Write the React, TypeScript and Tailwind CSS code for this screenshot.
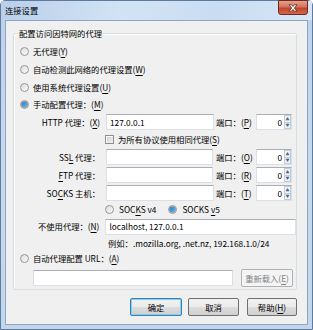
import type { ReactNode } from "react";

const font = { fontFamily: '"Noto Sans CJK SC", "Noto Sans", sans-serif' };

function Mn({ children }: { children: ReactNode }) {
	return <span className="underline decoration-[0.5px] underline-offset-[1.5px]">{children}</span>;
}

function Radio({ checked = false }: { checked?: boolean }) {
	return (
		<span className="flex size-[9px] shrink-0 items-center justify-center rounded-full border border-[#979797] bg-gradient-to-br from-[#dcdcdc] to-[#fbfbfb]">
			{checked && (
				<span className="size-[5px] rounded-full bg-gradient-to-br from-[#1d78c4] to-[#5bb7ef] ring-[0.5px] ring-[#1c5180]" />
			)}
		</span>
	);
}

function Check() {
	return (
		<span className="flex size-[9px] shrink-0 items-center justify-center border border-[#8f8f8f] bg-white">
			<span className="size-[6px] bg-gradient-to-br from-[#cbcfd5] to-[#f6f6f6]" />
		</span>
	);
}

function TextBox({ className = "", value = "" }: { className?: string; value?: string }) {
	return (
		<div
			className={
				"flex h-[16px] items-center border border-[#dbdfe6] border-t-[#abadb3] bg-white pl-[3px] text-[8.3px] text-black " +
				className
			}
		>
			{value}
		</div>
	);
}

function Spin() {
	return (
		<div className="flex h-[16px] w-[36px] border border-[#dbdfe6] border-t-[#abadb3] bg-white">
			<div className="flex flex-1 items-center justify-end pr-[2px] text-[8.3px]">0</div>
			<div className="flex w-[7px] flex-col">
				<div className="flex flex-1 items-center justify-center border border-[#c3ccd6] bg-[#f2f4f7] text-[4px] leading-none text-[#4d6185]">
					▲
				</div>
				<div className="flex flex-1 items-center justify-center border border-t-0 border-[#c3ccd6] bg-[#eef1f5] text-[4px] leading-none text-[#4d6185]">
					▼
				</div>
			</div>
		</div>
	);
}

function Btn({ children, className = "", focused = false, disabled = false }: {
	children: ReactNode;
	className?: string;
	focused?: boolean;
	disabled?: boolean;
}) {
	const border = focused ? "border-[#3c7fb1] shadow-[inset_0_0_0_1px_#7fd2f6]" : disabled ? "border-[#adb2b5]" : "border-[#707070]";
	const bg = disabled ? "bg-[#f4f4f4]" : "bg-[linear-gradient(#f2f2f2_0%,#ebebeb_50%,#dddddd_50%,#cfcfcf_100%)]";
	return (
		<div
			className={`flex items-center justify-center rounded-[2px] border text-[8.3px] ${border} ${bg} ${disabled ? "text-[#838383]" : "text-black"} ${className}`}
		>
			{children}
		</div>
	);
}

function ProxyRow({ label, value = "", port, inputW = "w-[107px]" }: {
	label: ReactNode;
	value?: string;
	port: ReactNode;
	inputW?: string;
}) {
	return (
		<div className="flex h-[18px] items-center">
			<div className="w-[82px] pr-[1px] text-right">{label}</div>
			<TextBox className={`ml-[5px] ${inputW}`} value={value} />
			<div className="ml-auto w-[41px] pl-[1px]">{port}</div>
			<div className="mr-[4px]">
				<Spin />
			</div>
		</div>
	);
}

export default function App() {
	return (
		<div className="w-[313px] h-[330px] overflow-hidden" style={font}>
			<div className="flex h-full w-full flex-col rounded-t-[5px] border border-[#5f7b9c] bg-gradient-to-b from-[#bcd2ec] via-[#c6d9ef] to-[#c2d6ec]">
				{/* title bar */}
				<div className="relative flex h-[19px] shrink-0 items-center bg-[linear-gradient(100deg,#b9cfea_0%,#d3e3f5_40%,#c9dcf2_70%,#d8e6f6_100%)] pl-[4px] text-[8.3px] text-black">
					连接设置
					<div className="absolute right-[4px] top-[-1px] flex h-[15px] w-[30px] items-center justify-center rounded-b-[3px] border border-[#6d2a22] bg-[linear-gradient(#e4a18f_0%,#d6735d_45%,#c2452d_55%,#d3644a_100%)]">
						<svg width="10" height="8" viewBox="0 0 10 8">
							<path
								d="M1 0.8 L3.6 0.8 L5 2.6 L6.4 0.8 L9 0.8 L6.3 4 L9 7.2 L6.4 7.2 L5 5.4 L3.6 7.2 L1 7.2 L3.7 4 Z"
								fill="#ffffff"
								stroke="#4d1a12"
								strokeWidth="0.7"
								strokeLinejoin="round"
							/>
						</svg>
					</div>
				</div>

				{/* client */}
				<div className="mx-[4px] mb-[4px] flex flex-1 flex-col border border-[#8ea6c3] bg-[#f0f0f0] text-[8.3px] text-black">
					{/* group box */}
					<div className="relative ml-[7px] mt-[12px] h-[257px] w-[284px] rounded-[2px] border border-[#d5dfe5] pl-[5px] pt-[8px] shadow-[inset_1px_1px_0_#ffffff]">
						<div className="absolute left-[4px] top-[-7px] bg-[#f0f0f0] px-[1px] leading-[12px]">
							配置访问因特网的代理
						</div>

						<div className="flex h-[18px] items-center gap-[4px] pl-[1px]">
							<Radio />
							<span>无代理(<Mn>Y</Mn>)</span>
						</div>
						<div className="flex h-[18px] items-center gap-[4px] pl-[1px]">
							<Radio />
							<span>自动检测此网络的代理设置(<Mn>W</Mn>)</span>
						</div>
						<div className="flex h-[18px] items-center gap-[4px] pl-[1px]">
							<Radio />
							<span>使用系统代理设置(<Mn>U</Mn>)</span>
						</div>
						<div className="flex h-[17px] items-center gap-[4px] pl-[1px]">
							<Radio checked />
							<span>手动配置代理：(<Mn>M</Mn>)</span>
						</div>

						<ProxyRow
							label={<>HTTP 代理：(<Mn>X</Mn>)</>}
							value="127.0.0.1"
							port={<>端口：(<Mn>P</Mn>)</>}
							inputW="w-[108px]"
						/>
						<div className="flex h-[17px] items-center gap-[4px] pl-[86px]">
							<Check />
							<span>为所有协议使用相同代理(<Mn>S</Mn>)</span>
						</div>
						<ProxyRow label={<>SS<Mn>L</Mn> 代理：</>} port={<>端口：(<Mn>O</Mn>)</>} />
						<ProxyRow label={<><Mn>F</Mn>TP 代理：</>} port={<>端口：(<Mn>R</Mn>)</>} />
						<ProxyRow label={<>SO<Mn>C</Mn>KS 主机：</>} port={<>端口：(<Mn>T</Mn>)</>} inputW="w-[108px]" />

						<div className="flex h-[15px] items-center pl-[86px]">
							<Radio />
							<span className="ml-[5px]">SOC<Mn>K</Mn>S v4</span>
							<span className="ml-[12px]"><Radio checked /></span>
							<span className="ml-[5px]">SOCKS <Mn>v</Mn>5</span>
						</div>

						<div className="flex h-[19px] items-center">
							<div className="w-[82px] pr-[1px] text-right">不使用代理：(<Mn>N</Mn>)</div>
							<TextBox className="ml-[5px] w-[192px]" value="localhost, 127.0.0.1" />
						</div>
						<div className="flex h-[14px] items-center pl-[89px]">例如：.mozilla.org, .net.nz, 192.168.1.0/24</div>

						<div className="flex h-[16px] items-center gap-[4px] pl-[1px]">
							<Radio />
							<span>自动代理配置 URL：(<Mn>A</Mn>)</span>
						</div>
						<div className="mt-[3px] flex items-center pl-[14px]">
							<TextBox className="w-[200px]" />
							<Btn disabled className="ml-[8px] h-[18px] w-[52px]">
								重新载入(<Mn>E</Mn>)
							</Btn>
						</div>
					</div>

					{/* buttons */}
					<div className="mt-[8px] flex justify-end pr-[10px]">
						<Btn focused className="h-[18px] w-[52px]">确定</Btn>
						<Btn className="ml-[6px] h-[18px] w-[51px]">取消</Btn>
						<Btn className="ml-[8px] h-[18px] w-[50px]">帮助(<Mn>H</Mn>)</Btn>
					</div>
				</div>
			</div>
		</div>
	);
}
